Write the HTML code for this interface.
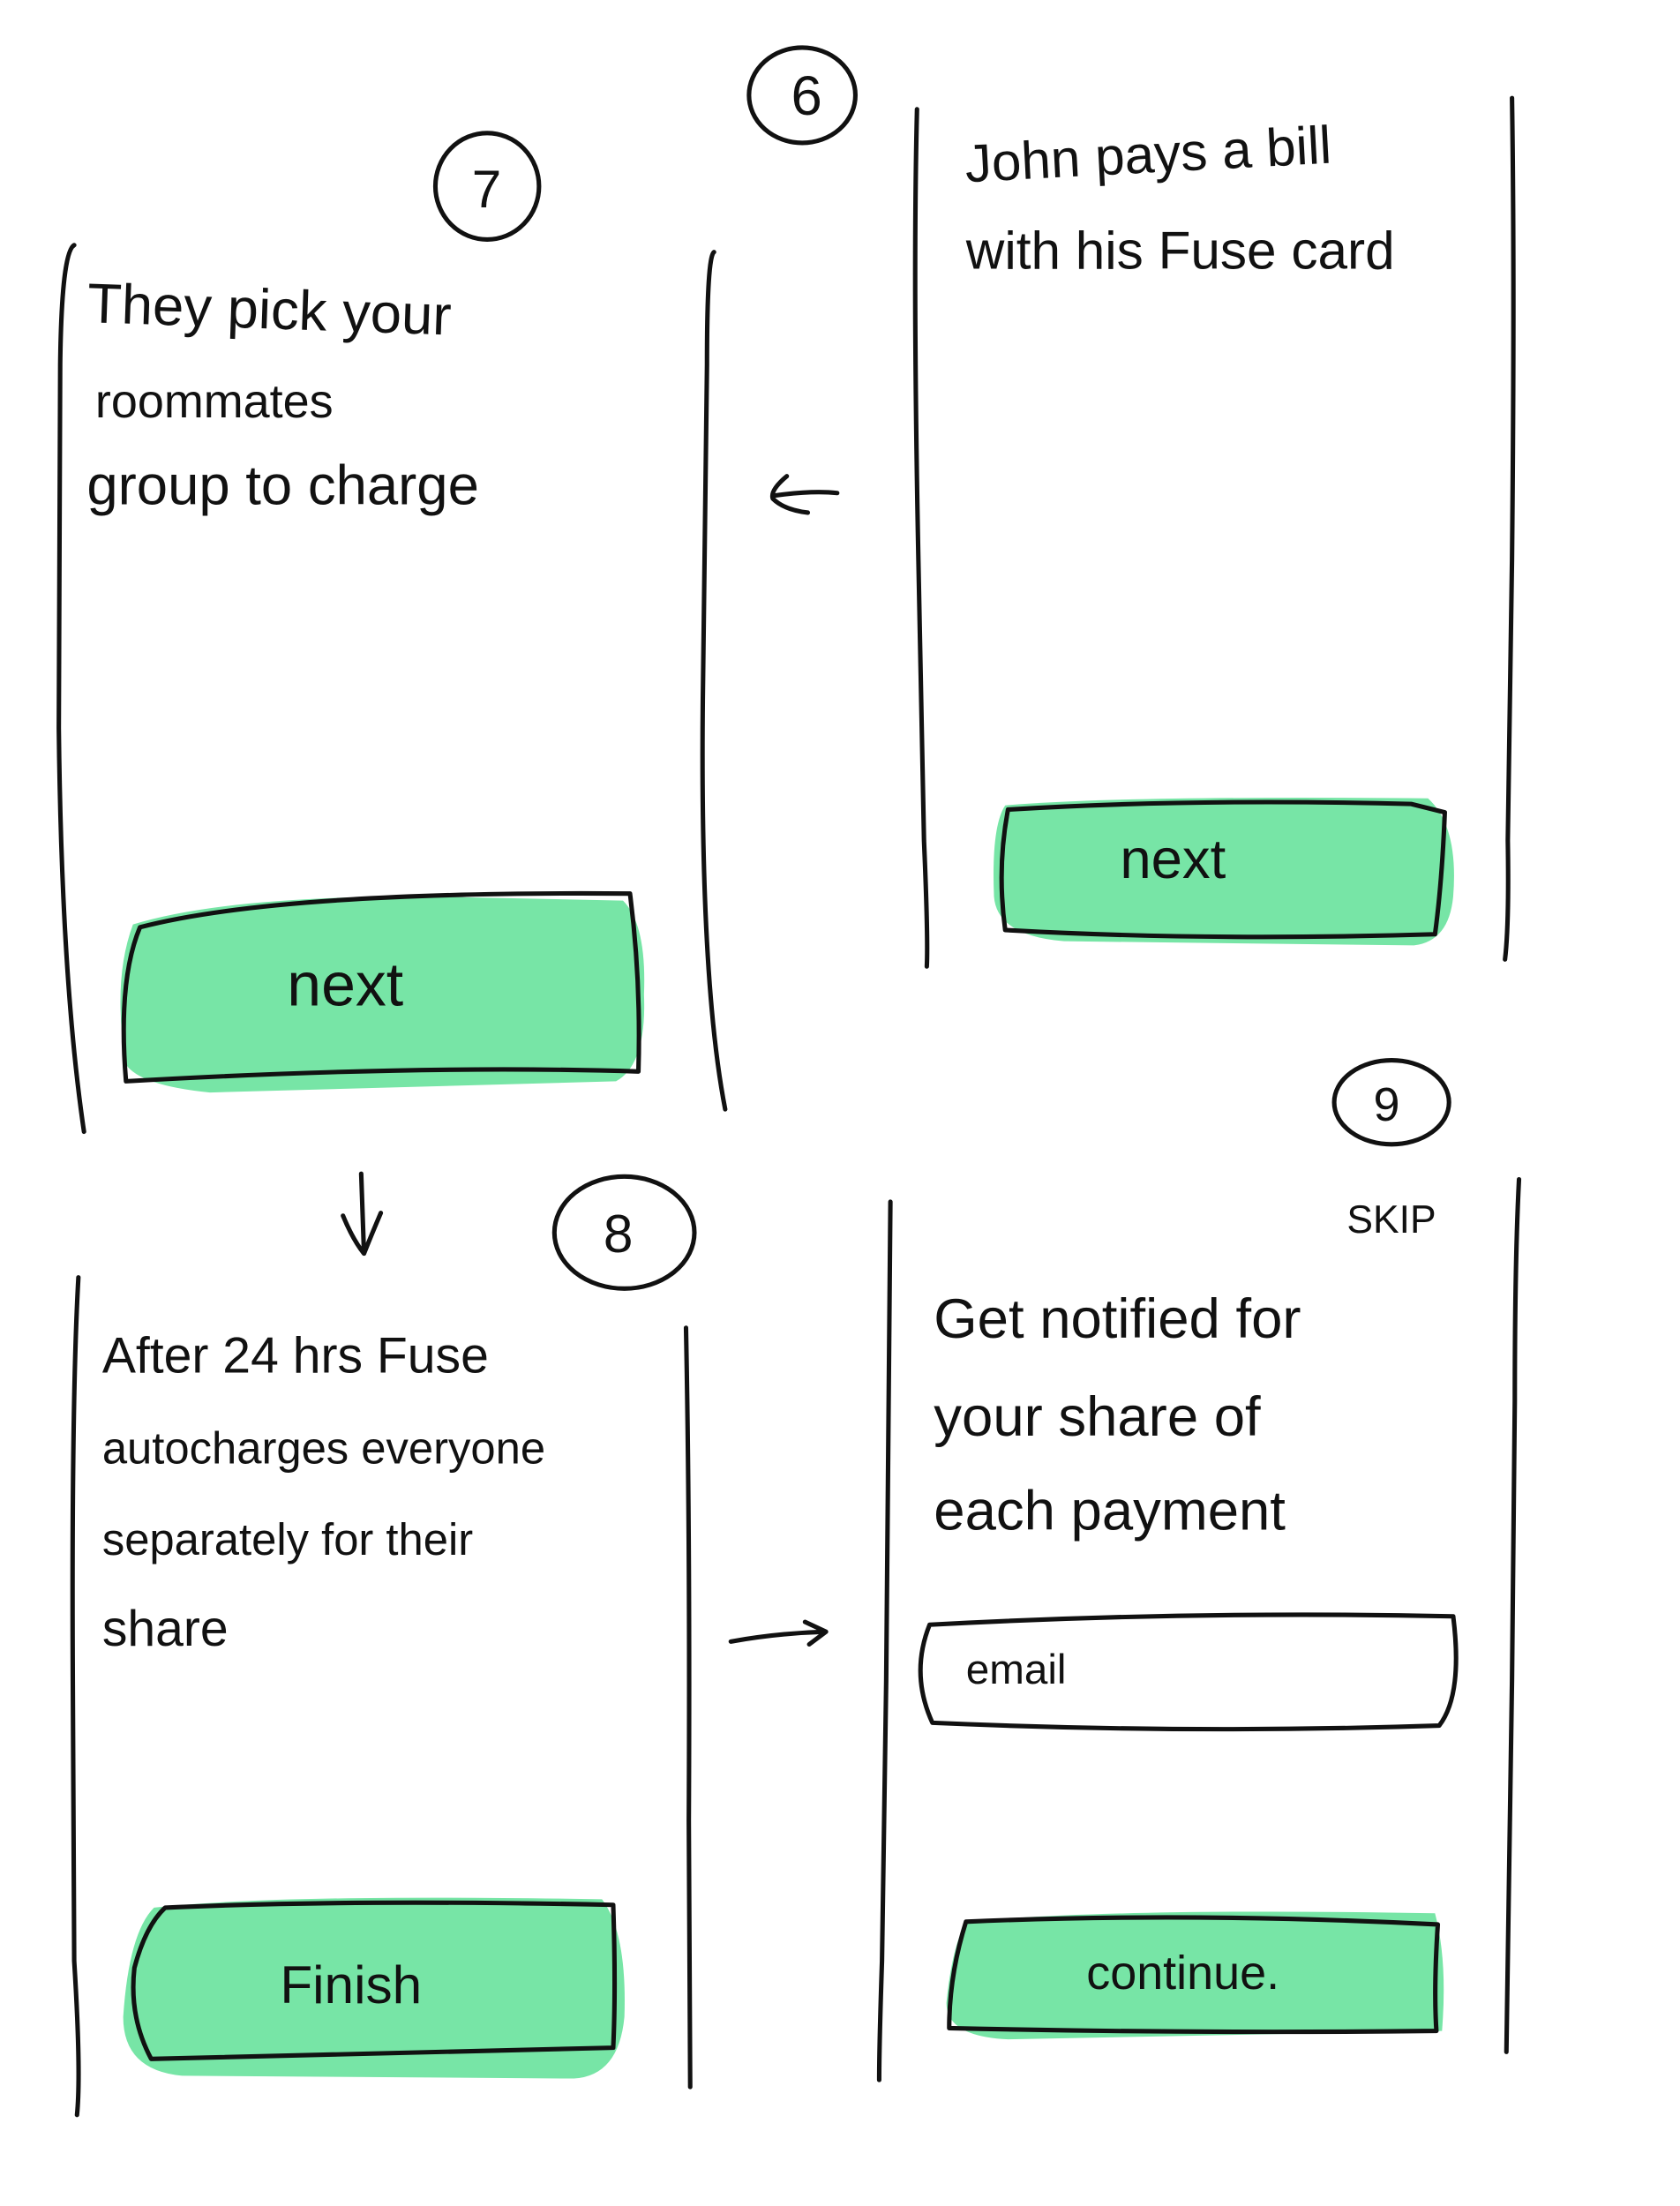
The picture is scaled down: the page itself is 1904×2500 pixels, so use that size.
<!DOCTYPE html>
<html><head><meta charset="utf-8"><style>
html,body{margin:0;padding:0;background:#fff;width:1904px;height:2500px;overflow:hidden}
svg{display:block}
text{font-family:"Liberation Sans",sans-serif;fill:#111}
</style></head><body>
<svg width="1904" height="2500" viewBox="0 0 1200 1575" preserveAspectRatio="none" xmlns="http://www.w3.org/2000/svg">
<g fill="none" stroke="#111" stroke-width="3.2" stroke-linecap="round" stroke-linejoin="round">
<!-- circles -->
<ellipse cx="573" cy="68" rx="38" ry="34"/>
<ellipse cx="348" cy="133" rx="37" ry="38"/>
<ellipse cx="446" cy="880" rx="50" ry="40"/>
<ellipse cx="994" cy="787" rx="41" ry="30"/>
<!-- panel TL -->
<path d="M53 175 Q44 180 43 260 L42 520 Q44 700 60 808"/>
<path d="M510 180 Q505 183 505 260 L502 500 Q500 700 518 792"/>
<!-- panel TR -->
<path d="M655 78 Q652 200 656 400 L660 600 Q663 670 662 690"/>
<path d="M1080 70 Q1082 200 1080 400 L1077 600 Q1078 660 1075 685"/>
<!-- panel BL -->
<path d="M56 912 Q51 1000 52 1200 L53 1400 Q58 1480 55 1510"/>
<path d="M490 948 Q493 1100 492 1300 L493 1490"/>
<!-- panel BR -->
<path d="M636 858 Q635 1000 633 1200 L630 1400 Q628 1460 628 1485"/>
<path d="M1085 842 Q1082 900 1082 1000 L1080 1200 Q1077 1400 1076 1465"/>
<!-- arrows -->
<path d="M598 352 Q580 350 552 354 M562 340 Q550 350 552 356 Q560 364 577 366"/>
<path d="M258 838 L260 895 M245 868 Q252 885 260 895 Q266 880 272 866"/>
<path d="M522 1172 Q555 1166 590 1165 M575 1158 L590 1165 L578 1174"/>
</g>
<!-- buttons -->
<g>
<path d="M95 660 Q160 640 300 640 L445 643 Q462 660 460 710 Q462 760 440 772 L150 780 Q100 775 90 760 Q80 700 95 660Z" fill="#77e5a6"/>
<path d="M718 575 Q800 568 1020 570 Q1042 590 1038 640 Q1035 672 1010 675 L760 672 Q712 668 710 640 Q708 590 718 575Z" fill="#77e5a6"/>
<path d="M110 1362 Q200 1352 430 1356 Q448 1380 446 1440 Q442 1482 410 1484 L130 1482 Q88 1478 88 1440 Q92 1380 110 1362Z" fill="#77e5a6"/>
<path d="M690 1372 Q800 1362 1025 1366 Q1034 1400 1030 1450 L720 1456 Q676 1454 676 1430 Q680 1390 690 1372Z" fill="#77e5a6"/>
</g>
<g fill="none" stroke="#111" stroke-width="3.2" stroke-linecap="round" stroke-linejoin="round">
<path d="M100 662 Q200 636 450 638 Q458 700 456 765 Q300 760 90 772 Q84 700 100 662Z"/>
<path d="M720 578 Q850 570 1008 574 L1032 580 Q1030 630 1025 667 Q860 672 718 664 Q712 620 720 578Z"/>
<path d="M118 1362 Q250 1356 438 1360 Q440 1420 438 1462 Q300 1466 108 1470 Q92 1440 96 1405 Q104 1375 118 1362Z"/>
<path d="M690 1372 Q850 1365 1027 1374 Q1024 1420 1026 1450 Q850 1452 678 1448 Q678 1410 690 1372Z"/>
<path d="M664 1160 Q850 1150 1038 1154 Q1045 1210 1028 1232 Q850 1238 666 1230 Q650 1195 664 1160Z"/>
</g>
<!-- text -->
<text x="565" y="82" font-size="40">6</text>
<text x="337" y="148" font-size="38">7</text>
<text x="431" y="894" font-size="38">8</text>
<text x="981" y="800" font-size="34">9</text>
<text x="62" y="230" font-size="40" transform="rotate(2 62 230)">They pick your</text>
<text x="68" y="298" font-size="34">roommates</text>
<text x="62" y="360" font-size="40">group to charge</text>
<text x="205" y="718" font-size="44">next</text>
<text x="690" y="130" font-size="38" transform="rotate(-3 690 130)">John pays a bill</text>
<text x="690" y="192" font-size="38">with his Fuse card</text>
<text x="800" y="627" font-size="40">next</text>
<text x="73" y="980" font-size="36">After 24 hrs Fuse</text>
<text x="73" y="1045" font-size="32">autocharges everyone</text>
<text x="73" y="1110" font-size="32">separately for their</text>
<text x="73" y="1175" font-size="36">share</text>
<text x="200" y="1430" font-size="38">Finish</text>
<text x="962" y="880" font-size="28">SKIP</text>
<text x="667" y="955" font-size="40">Get notified for</text>
<text x="667" y="1025" font-size="40">your share of</text>
<text x="667" y="1092" font-size="40">each payment</text>
<text x="690" y="1202" font-size="30">email</text>
<text x="776" y="1420" font-size="34">continue.</text>
</svg>
</body></html>
